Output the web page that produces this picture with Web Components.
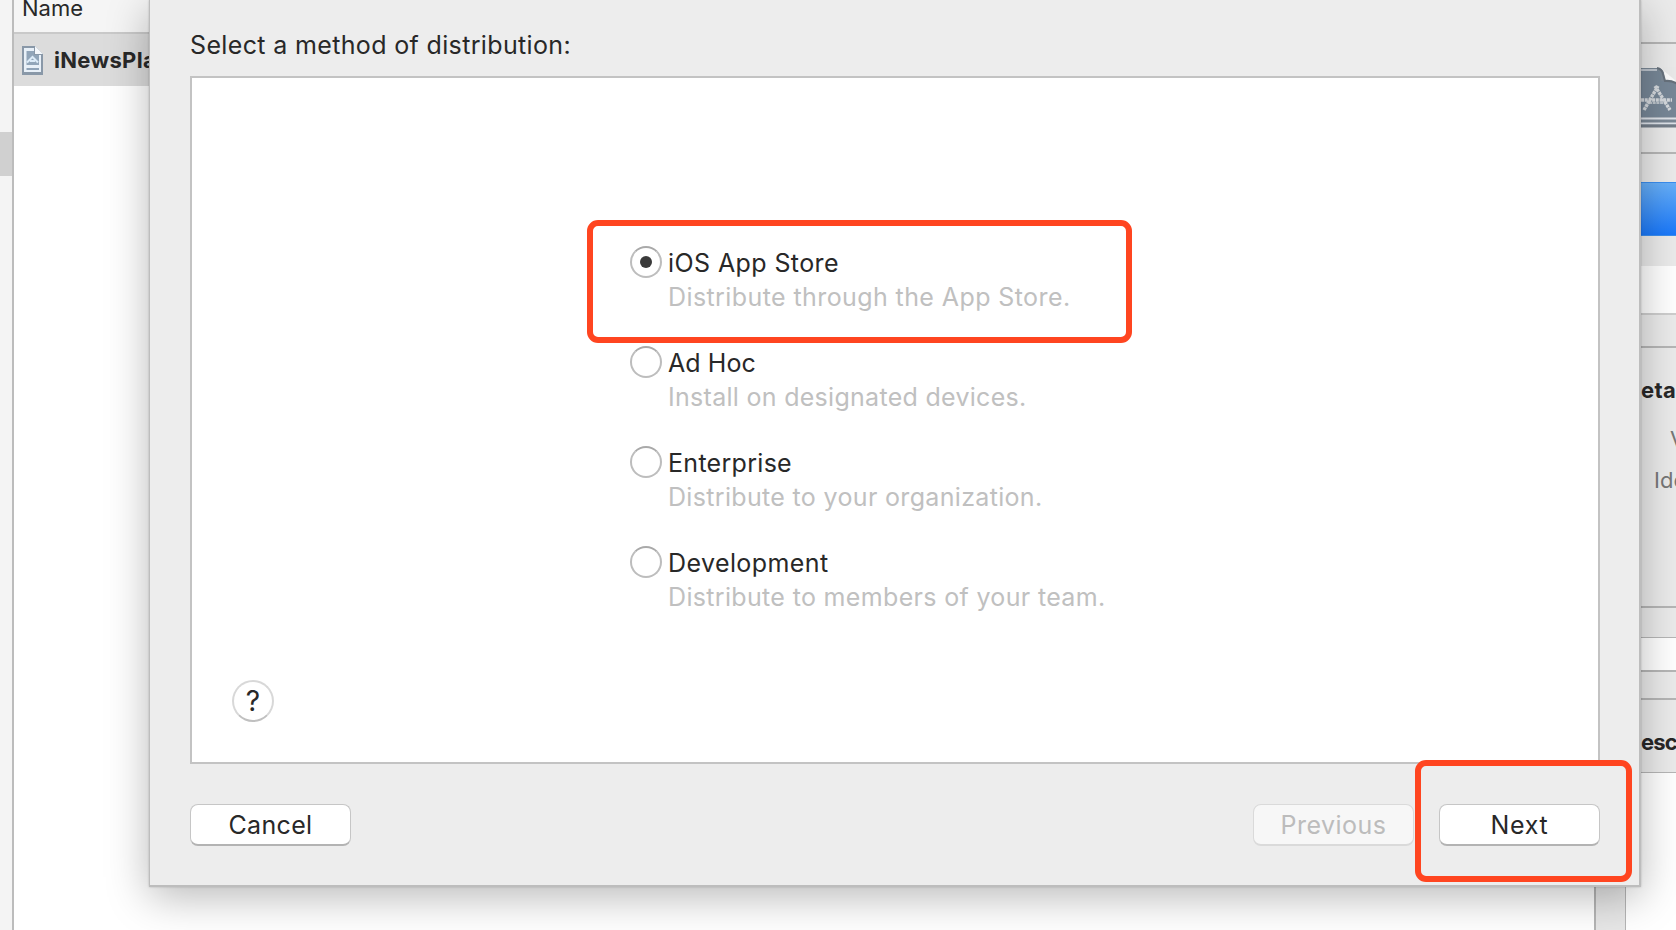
<!DOCTYPE html>
<html lang="en">
<head>
<meta charset="utf-8">
<title>Distribute App</title>
<style>
html,body{margin:0;height:100%;overflow:hidden;background:#fff}
body{font:25px/34px Inter,"Liberation Sans",sans-serif;color:#282828}
</style>
</head>
<body>
<organizer-window></organizer-window>
<script>
const define=(name,html,init)=>customElements.define(name,class extends HTMLElement{
  constructor(){super();this.attachShadow({mode:'open'}).innerHTML=html;}
  connectedCallback(){if(init)init.call(this);}
});

/* A single line of text tracked out to the width given in its "w" attribute. */
define('tracked-text',`<style>:host{display:block;white-space:nowrap;width:max-content}span{display:inline-block}</style><span><slot></slot></span>`,function(){
  const s=this.shadowRoot.querySelector('span'),w=parseFloat(this.getAttribute('w'));
  if(!w)return;
  s.style.letterSpacing=((w-s.getBoundingClientRect().width)/this.textContent.length).toFixed(3)+'px';
});

define('side-bar',`<style>
:host{display:block;box-sizing:border-box;background:#f4f4f4;border-right:2px solid #bcbcbc;padding-top:132px}
div{height:44px;background:#d0d0d0}
</style><div></div>`);

define('archive-list',`<style>
:host{display:block;background:#fff;overflow:hidden}
header{display:flex;align-items:flex-start;box-sizing:border-box;height:34px;border-bottom:2px solid #c9c9c9;background:#f5f5f5;font-size:22px;line-height:16px;padding-left:8px}
.row{height:52px;background:#dcdcdc;display:flex;gap:10px;padding-left:8px;font-size:22px;font-weight:700;line-height:52px}
svg{margin-top:12px;flex:none}
</style>
<header><tracked-text w="61">Name</tracked-text></header>
<div class="row">
<svg width="22" height="30" viewBox="0 0 22 30"><path d="M0 0H13L21 8V29H0Z" fill="#8998a8"/><path d="M2 2H12V9H19V26H2Z" fill="#e8f0f8"/><path d="M4.500 5H12V9H17V19H4.500Z" fill="#91a5b9"/><path d="M5 16.500L10.500 11L16 16.500M8 15H13" fill="none" stroke="#dcebf8" stroke-width="2"/><path d="M4.500 23H17" stroke="#8fa3b8" stroke-width="2"/><path d="M13 0V8H21Z" fill="#f4f7fb"/></svg>
<tracked-text w="102">iNewsPla</tracked-text>
</div>`);

define('split-bar',`<style>:host{display:block;background:#e7e7e7;border:solid #b5b5b5;border-width:0 1px 0 2px;box-sizing:border-box}</style>`);

define('app-icon',`<style>:host{display:block}svg{display:block;overflow:hidden}</style>
<svg width="40" height="62" viewBox="0 0 40 62">
<path d="M0 1H18Q22 2 24 8L27 14L40 17V58H0Z" fill="#7c8996"/>
<path d="M0 3H16Q19 4 20 9V14H32L36 19V50H0Z" fill="#778797"/>
<path d="M0 3H16" stroke="#d5dae0" stroke-width="1.500"/>
<path d="M22 0H40V17L36 15L24 14Z" fill="#eaeaea"/><path d="M23 4L25 14L35 14Z" fill="#fbfbfb"/><path d="M16 1Q21 2 22 7L24 14Q33 13 40 20" fill="none" stroke="#67717c" stroke-width="2"/>
<path d="M37 20V50" stroke="#cfd6df" stroke-width="2"/>
<path d="M0 51.500H38M0 56.500H40" stroke="#dfe4ea" stroke-width="2"/><path d="M0 59H40" stroke="#747e89" stroke-width="3"/>
<g fill="none" stroke="#d5d9dd" stroke-width="3.400" stroke-dasharray="3 .7"><path d="M3 43L17 19M14 19L29 43M0 33H31"/><path d="M8 36H26" stroke-width="1.500"/></g>
</svg>`);

define('inspector-pane',`<style>
:host{display:flex;flex-direction:column;background:#fff;color:#282828;font-size:22px;overflow:hidden;min-width:0}
section{box-sizing:border-box;background:#ebebeb;border-bottom:2px solid #b6b6b6;flex:none;padding-left:15px}
.field{background:#fff}
.act{height:54px;margin-left:-15px;background:linear-gradient(#67aff8,#1a78fa);border:solid #3a8ef0;border-width:1px 0;box-sizing:border-box}
.white{height:47px;margin:30px 0 0 -15px;background:#fff;border-bottom:2px solid #cecece}
b{display:block;font-weight:700;line-height:30px}
.g{color:#777}
</style>
<section style="height:44px"></section>
<section style="height:110px;padding-top:23px"><app-icon></app-icon></section>
<section style="height:194px;padding-top:28px"><div class="act"></div><div class="white"></div></section>
<section style="height:260px;padding-top:27px"><b><tracked-text w="35">eta</tracked-text></b>
<div class="g" style="padding:17px 0 0 29px;line-height:34px">V</div><div class="g" style="padding:7px 0 0 13px;line-height:34px">Ide</div></section>
<section style="height:30px;border-bottom-width:1px"></section>
<section class="field" style="height:34px"></section>
<section style="height:28px"></section>
<section style="height:73px;padding-top:27px;border-bottom-width:1px"><b><tracked-text w="36">esc</tracked-text></b></section>`);

define('radio-option',`<style>
:host{display:grid;grid-template-columns:32px auto;column-gap:6px;height:68px}
i{box-sizing:border-box;width:32px;height:32px;border:2px solid #bdbdbd;border-top-color:#a9a9a9;border-radius:50%;display:grid;place-items:center;background:#fff}
:host([checked]) i::after{content:"";width:12px;height:12px;border-radius:50%;background:#3a3a3a}
.sub{color:#c0c0c0}
</style><i></i><div><slot></slot><div class="sub"><slot name="sub"></slot></div></div>`);

define('push-button',`<style>
:host{display:flex;box-sizing:border-box;width:161px;height:42px;justify-content:center;border:1.500px solid #c6c6c6;border-bottom:2px solid #b3b3b3;border-radius:8px;background:#fff;line-height:40px}
:host([disabled]){background:#f7f7f7;border-color:#dadada;color:#bcbcbc}
</style><slot></slot>`);

define('help-button',`<style>:host{display:grid;place-items:center;box-sizing:border-box;width:42px;height:42px;border:2px solid #d8d8d8;border-bottom:2px solid #c0c0c0;border-radius:50%;background:#fff;font-size:28px;line-height:38px}</style><slot></slot>`);

define('distribution-sheet',`<style>
:host{display:flex;flex-direction:column;box-sizing:border-box;background:#ededed;border:solid #bdbdbd;border-width:0 2px 2px 1px;padding:28px 40px 0 40px;box-shadow:0 10px 40px rgba(0,0,0,.28),0 0 2px rgba(0,0,0,.2)}
main{box-sizing:border-box;width:1410px;height:688px;margin-top:14px;border:2px solid #c3c3c3;background:#fff;display:flex;flex-direction:column}
.options{display:flex;flex-direction:column;gap:32px;margin:168px 0 0 438px}
help-button{margin:66px 0 0 40px}
footer{display:flex;width:1410px;margin-top:40px}
push-button:nth-child(2){margin-left:auto;margin-right:25px}
</style>
<tracked-text w="381">Select a method of distribution:</tracked-text>
<main><div class="options">
<radio-option checked><tracked-text w="171">iOS App Store</tracked-text><tracked-text slot="sub" w="402.500">Distribute through the App Store.</tracked-text></radio-option>
<radio-option><tracked-text w="88">Ad Hoc</tracked-text><tracked-text slot="sub" w="358.500">Install on designated devices.</tracked-text></radio-option>
<radio-option><tracked-text w="124">Enterprise</tracked-text><tracked-text slot="sub" w="374.500">Distribute to your organization.</tracked-text></radio-option>
<radio-option><tracked-text w="160.500">Development</tracked-text><tracked-text slot="sub" w="437.500">Distribute to members of your team.</tracked-text></radio-option>
</div><help-button>?</help-button></main>
<footer><push-button><tracked-text w="84">Cancel</tracked-text></push-button><push-button disabled><tracked-text w="106">Previous</tracked-text></push-button><push-button><tracked-text w="58">Next</tracked-text></push-button></footer>`);

define('callout-frame',`<style>:host{display:block;box-sizing:border-box;border:6px solid #ff4520;border-radius:11px;pointer-events:none}</style>`);

define('organizer-window',`<style>
:host{display:grid;grid-template-columns:14px 1580px 32px 50px;position:relative;width:1676px;height:930px;overflow:hidden}
archive-list,side-bar,split-bar{min-width:0}
distribution-sheet{position:absolute;left:149px;top:0;width:1492px;height:887px}
.one{position:absolute;left:587px;top:220px;width:545px;height:123px}
.two{position:absolute;left:1415px;top:760px;width:217px;height:122px}
</style>
<side-bar></side-bar><archive-list></archive-list><split-bar></split-bar><inspector-pane></inspector-pane>
<distribution-sheet></distribution-sheet>
<callout-frame class="one"></callout-frame><callout-frame class="two"></callout-frame>`);
</script>
</body>
</html>
